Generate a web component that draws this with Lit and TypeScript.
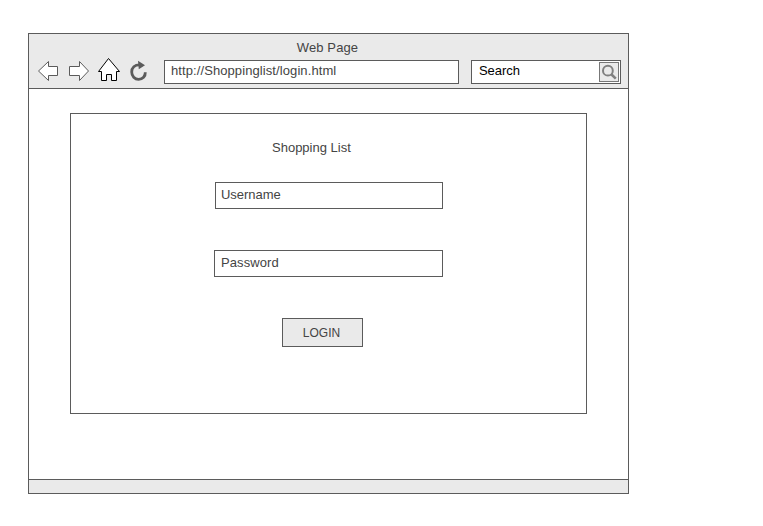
import { LitElement, html, css } from "lit";
import { customElement } from "lit/decorators.js";

@customElement("app-root")
export class AppRoot extends LitElement {
  static styles = css`
    :host {
      display: block;
      box-sizing: border-box;
      width: 763px;
      height: 526px;
      padding: 33px 0 0 28px;
      background: #fff;
      color: #444;
      font: 13px/15px "Liberation Sans", Arial, sans-serif;
      white-space: nowrap;
    }
    * { box-sizing: border-box; }
    .window {
      width: 601px;
      height: 461px;
      border: 1px solid #5b5b5b;
      display: flex;
      flex-direction: column;
    }
    .chrome {
      height: 55px;
      background: #eaeaea;
      border-bottom: 1px solid #5b5b5b;
      padding-top: 6px;
    }
    .title { text-align: center; height: 20px; padding-right: 2px; letter-spacing: 0.1px; }
    .bar { display: flex; height: 24px; }
    .icons { width: 135px; height: 28px; margin-top: -4px; flex: none; display: block; }
    .box { border: 1px solid #5b5b5b; background: #fff; height: 24px; padding: 2px 6px; }
    .url { width: 295px; margin-right: 12px; letter-spacing: 0.09px; }
    .search { width: 150px; padding: 1px 1px 1px 7px; color: #000; display: flex; justify-content: space-between; }
    .label { padding-top: 1px; letter-spacing: -0.05px; }
    .find { width: 20px; height: 20px; border: 1px solid #777; background: #eaeaea; }
    .find svg { display: block; }
    .page { flex: 1; padding: 24px 0 0 41px; }
    .panel {
      width: 517px;
      height: 301px;
      border: 1px solid #5b5b5b;
      display: flex;
      flex-direction: column;
    }
    .heading { margin: 26px 0 0 201px; height: 42px; }
    .field { height: 27px; padding: 4px 5px; }
    .user { width: 228px; margin-left: 144px; letter-spacing: -0.04px; }
    .pass { width: 229px; margin: 41px 0 0 143px; padding-left: 6px; letter-spacing: 0.1px; }
    .login {
      width: 81px;
      height: 29px;
      margin: 41px 0 0 211px;
      padding: 1px 2px 0 0;
      border: 1px solid #5b5b5b;
      background: #eaeaea;
      color: #444;
      font: 12px/27px "Liberation Sans", Arial, sans-serif;
      text-align: center;
    }
    .status { height: 14px; flex: none; border-top: 1px solid #5b5b5b; background: #eaeaea; }
  `;

  render() {
    return html`
      <div class="window">
        <div class="chrome">
          <div class="title">Web Page</div>
          <div class="bar">
            <svg class="icons" viewBox="29 56 135 28" fill="none">
              <g fill="#fff" stroke="#5b5b5b" stroke-width="1">
                <path d="M38.5 71 48.5 61.5V66.5H57.5V75.5H48.5V80.5Z" />
                <path d="M88.5 71 79.5 61.5V66.5H69.5V75.5H79.5V80.5Z" />
              </g>
              <path d="M108.5 58.5 119.5 71.5H116.5V80.5H111.5V74.5H106.5V80.5H101.5V71.5H98.5Z" fill="#fff" stroke="#000" />
              <path d="M139.5 64.8C134.8 64.8 131.7 67.8 131.7 72C131.7 76.2 134.7 79.3 138.6 79.3C142.8 79.3 145.5 76.3 145.3 72.3" stroke="#5b5b5b" stroke-width="2.8" />
              <path d="M138 60.8 145 65.3 138.8 69.2Z" fill="#5b5b5b" />
            </svg>
            <div class="box url">http://Shoppinglist/login.html</div>
            <div class="box search">
              <span class="label">Search</span>
              <span class="find">
                <svg width="18" height="18" viewBox="0 0 18 18" fill="none" stroke="#808080">
                  <circle cx="7.9" cy="7.7" r="4.9" stroke-width="2" />
                  <path d="M11.3 11.2 15.8 15.6" stroke-width="2.6" />
                </svg>
              </span>
            </div>
          </div>
        </div>
        <div class="page">
          <div class="panel">
            <div class="heading">Shopping List</div>
            <div class="box field user">Username</div>
            <div class="box field pass">Password</div>
            <button class="login">LOGIN</button>
          </div>
        </div>
        <div class="status"></div>
      </div>
    `;
  }
}
